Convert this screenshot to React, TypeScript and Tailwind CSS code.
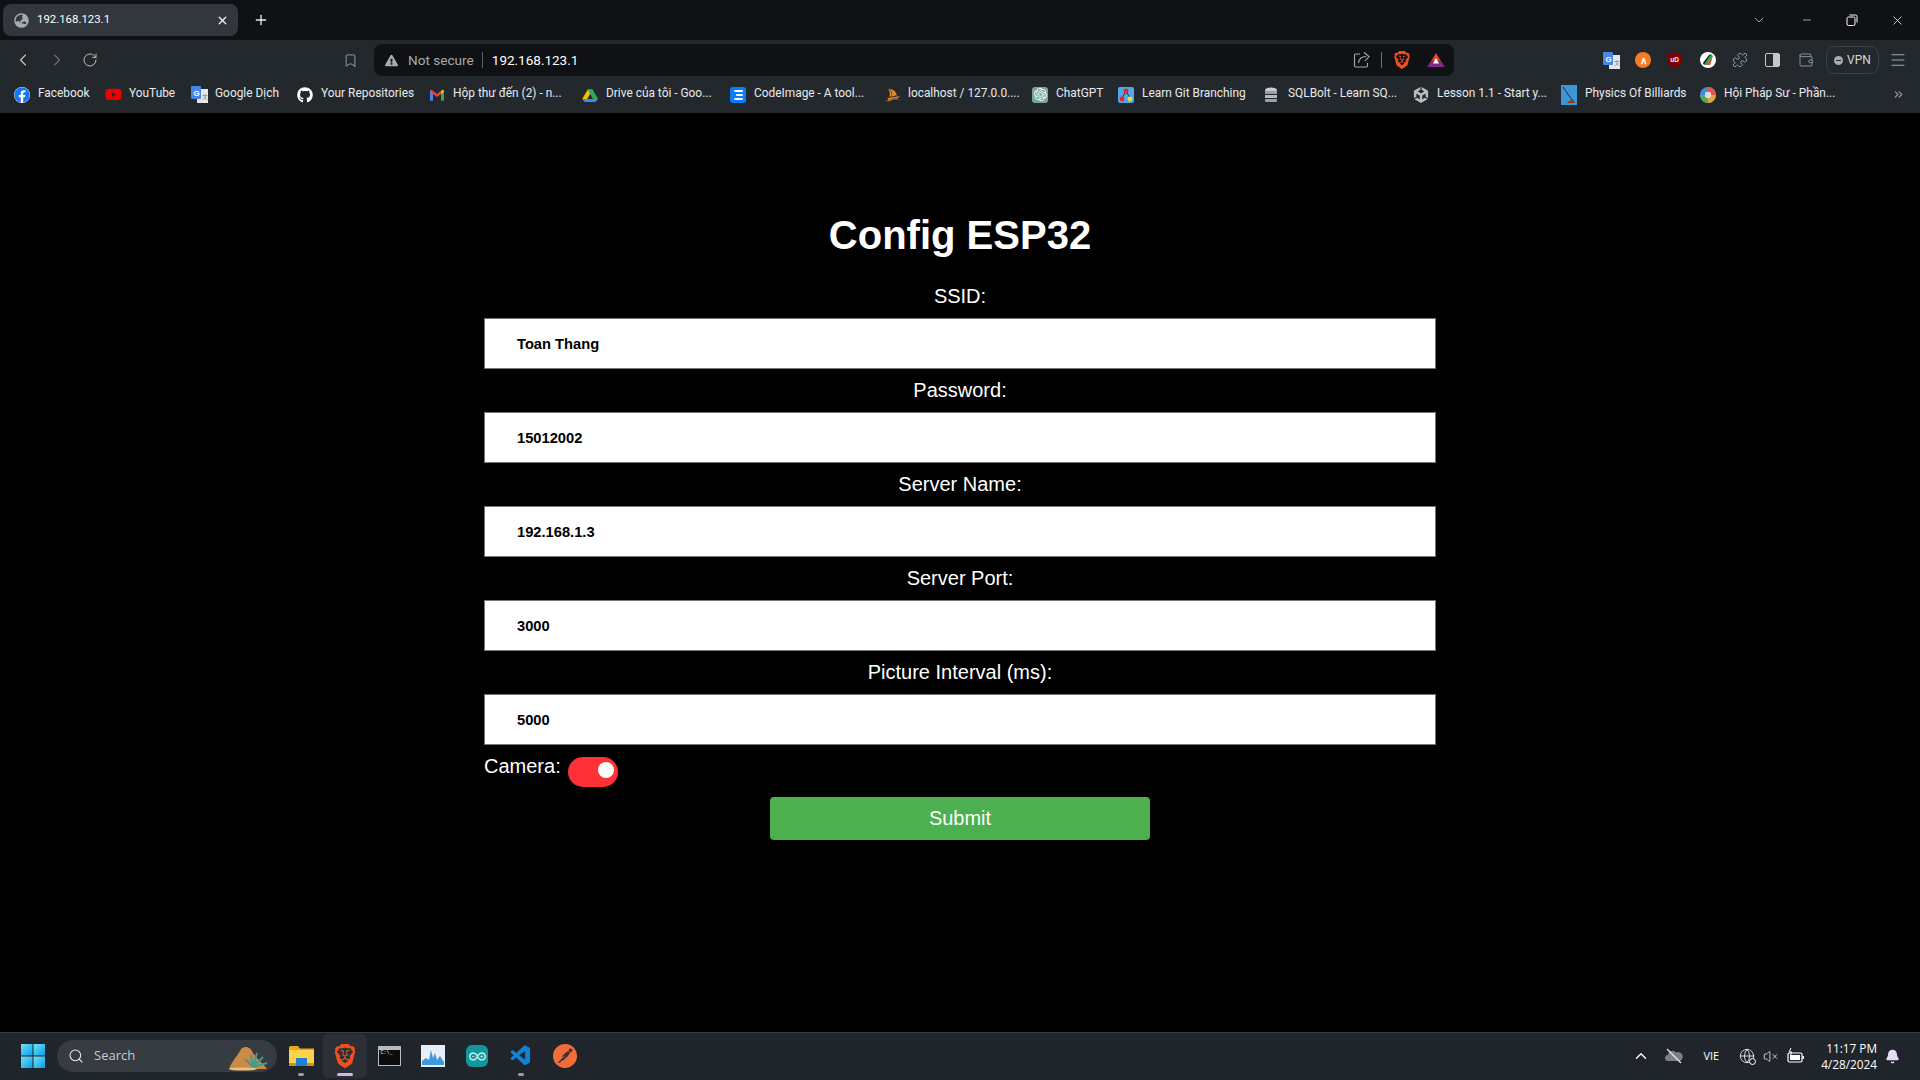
import React from "react";
import { ChevronLeft, ChevronRight, RotateCw, Bookmark, X, Plus, ChevronDown, Minus, Puzzle, Wallet, Menu, ChevronsRight, ChevronUp, Search, Globe, VolumeX, Bell } from "lucide-react";
import { FaFacebook, FaYoutube, FaGithub, FaGlobeAsia, FaExclamationTriangle } from "react-icons/fa";
import { SiBrave, SiOpenai, SiUnity, SiPhpmyadmin, SiArduino, SiPostman } from "react-icons/si";
import { VscVscode } from "react-icons/vsc";

const GT = () => (
  <svg width="17" height="17" viewBox="0 0 17 17">
    <rect x="6" y="3" width="11" height="14" fill="#e5e7eb" />
    <rect x="0" y="0" width="10" height="13" rx="1" fill="#4a86e8" />
    <text x="2.4" y="9.5" fontSize="8" fontWeight="700" fill="#fff" fontFamily="Liberation Sans">G</text>
    <text x="10.5" y="13" fontSize="6" fill="#6b7280" fontFamily="Liberation Sans">文</text>
  </svg>
);
const Gmail = () => (
  <svg width="16" height="16" viewBox="0 0 16 16">
    <path d="M1 3.5V13.5H4V7L8 10L8 7L2.5 2.8Z" fill="#ea4335" />
    <path d="M15 3.5V13.5H12V7L8 10V7L13.5 2.8Z" fill="#ea4335" />
    <path d="M1 4V13.5H4V7Z" fill="#4285f4" />
    <path d="M15 4V13.5H12V7Z" fill="#34a853" />
    <path d="M12 7L15 4.8V3.5L13.5 2.8L12 3.9Z" fill="#fbbc04" />
  </svg>
);
const Drive = () => (
  <svg width="16" height="16" viewBox="0 0 16 16">
    <path d="M5.5 1.5H10.5L5 11H0Z" fill="#fbbc04" transform="translate(0.2 1)" />
    <path d="M10.7 2.5L16 12H11L5.7 2.5Z" fill="#34a853" />
    <path d="M5 12H16L13.5 15H2.5L0.2 12Z" fill="#4285f4" />
  </svg>
);
const CodeImage = () => (
  <div className="w-4 h-4 rounded-[3px] bg-[#0a7cff] flex flex-col items-center justify-center gap-[2px]">
    <div className="w-[9px] h-[2px] bg-white rounded" />
    <div className="w-[7px] h-[2px] bg-white rounded ml-[2px]" />
    <div className="w-[9px] h-[2px] bg-white rounded" />
  </div>
);
const GitB = () => (
  <svg width="16" height="16" viewBox="0 0 16 16">
    <rect width="16" height="16" rx="2" fill="#4fa8e8" />
    <path d="M8 4L4 11M8 4L12 11" stroke="#17324a" strokeWidth="1" />
    <circle cx="8" cy="4" r="2.4" fill="#e8262b" />
    <circle cx="4" cy="12" r="2.4" fill="#e8262b" />
    <circle cx="12" cy="12" r="2.4" fill="#eadf3a" />
  </svg>
);
const Db = () => (
  <svg width="14" height="16" viewBox="0 0 14 16">
    <ellipse cx="7" cy="3" rx="6" ry="2.5" fill="#c8ccd0" />
    <rect x="1" y="4" width="12" height="3" fill="#9aa0a6" />
    <rect x="1" y="8" width="12" height="3" fill="#b6bbc0" />
    <rect x="1" y="12" width="12" height="3" rx="1" fill="#9aa0a6" />
  </svg>
);
const Billiards = () => (
  <svg width="16" height="20" viewBox="0 0 16 20">
    <rect width="16" height="20" fill="#3b97d6" />
    <path d="M2 2L11 15" stroke="#41240f" strokeWidth="1" fill="none" />
    <path d="M5 18L12 14L14 18Z" fill="#8f3b24" />
  </svg>
);
const Mage = () => (
  <svg width="16" height="16" viewBox="0 0 16 16">
    <circle cx="8" cy="8" r="8" fill="#3f8fd6" />
    <path d="M8 8L8 0A8 8 0 0 1 16 8Z" fill="#e2574c" />
    <path d="M8 8L16 8A8 8 0 0 1 8 16Z" fill="#e8a33c" />
    <path d="M8 8L8 16A8 8 0 0 1 0 8Z" fill="#58a55c" />
    <circle cx="8" cy="8" r="3.2" fill="#ddd" />
  </svg>
);

const bookmarks = [
  { w: "w-[91px]", t: "Facebook", i: <FaFacebook className="text-[#1877f2] bg-white rounded-full" size={16} /> },
  { w: "w-[86px]", t: "YouTube", i: <FaYoutube className="text-[#f00000]" size={17} /> },
  { w: "w-[106px]", t: "Google Dịch", i: <GT /> },
  { w: "w-[132px]", t: "Your Repositories", i: <FaGithub className="text-white" size={16} /> },
  { w: "w-[153px]", t: "Hộp thư đến (2) - n...", i: <Gmail /> },
  { w: "w-[148px]", t: "Drive của tôi - Goo...", i: <Drive /> },
  { w: "w-[154px]", t: "CodeImage - A tool...", i: <CodeImage /> },
  { w: "w-[148px]", t: "localhost / 127.0.0....", i: <SiPhpmyadmin className="text-[#e58a2b]" size={18} /> },
  { w: "w-[86px]", t: "ChatGPT", i: <div className="w-4 h-4 rounded-[3px] bg-[#74aa9c] flex items-center justify-center"><SiOpenai className="text-white" size={13} /></div> },
  { w: "w-[146px]", t: "Learn Git Branching", i: <GitB /> },
  { w: "w-[149px]", t: "SQLBolt - Learn SQ...", i: <Db /> },
  { w: "w-[148px]", t: "Lesson 1.1 - Start y...", i: <SiUnity className="text-[#b8bcc0]" size={16} /> },
  { w: "w-[139px]", t: "Physics Of Billiards", i: <Billiards /> },
  { w: "w-[190px]", t: "Hội Pháp Sư - Phần...", i: <Mage /> },
];

const fields = [
  ["SSID:", "Toan Thang"],
  ["Password:", "15012002"],
  ["Server Name:", "192.168.1.3"],
  ["Server Port:", "3000"],
  ["Picture Interval (ms):", "5000"],
];

const Win11 = () => (
  <svg width="24" height="24" viewBox="0 0 24 24">
    <defs>
      <linearGradient id="w" x1="0" y1="0" x2="1" y2="1">
        <stop offset="0" stopColor="#6fe3f7" />
        <stop offset="1" stopColor="#0b9be8" />
      </linearGradient>
    </defs>
    <rect x="0" y="0" width="11.5" height="11.5" fill="url(#w)" />
    <rect x="12.5" y="0" width="11.5" height="11.5" fill="url(#w)" />
    <rect x="0" y="12.5" width="11.5" height="11.5" fill="url(#w)" />
    <rect x="12.5" y="12.5" width="11.5" height="11.5" fill="url(#w)" />
  </svg>
);
const Folder = () => (
  <svg width="25" height="22" viewBox="0 0 25 22">
    <path d="M0 2.5A1.5 1.5 0 0 1 1.5 1H9L11 3.5H25V21H0Z" fill="#e9a916" />
    <rect x="0" y="5" width="25" height="16" fill="#fbd24a" />
    <rect x="7" y="13" width="11" height="8" fill="#1b82d2" />
    <rect x="0" y="18" width="7" height="3" fill="#c9921a" />
    <rect x="18" y="18" width="7" height="3" fill="#c9921a" />
  </svg>
);
const Cmd = () => (
  <div className="w-[23px] h-[20px] bg-[#0c0c0c] border border-[#b8bcc0] flex flex-col">
    <div className="h-[3px] bg-[#b8bcc0]" />
    <div className="text-[5px] leading-[7px] text-white pl-[2px] font-['Liberation_Mono']">C:\_</div>
  </div>
);
const Monitor = () => (
  <svg width="24" height="22" viewBox="0 0 24 22">
    <rect width="24" height="22" fill="#e8eef5" />
    <path d="M1 20V16L5 13L8 15L10 5L12 13L14 8L16 15L19 11L23 17V20Z" fill="#3f97dc" />
  </svg>
);
const Arduino = () => (
  <div className="w-[22px] h-[22px] rounded-[6px] bg-[#12979c] flex items-center justify-center">
    <SiArduino className="text-[#c9f1f1]" size={17} />
  </div>
);
const Battery = () => (
  <svg width="18" height="16" viewBox="0 0 18 16" fill="none">
    <rect x="1" y="5" width="14" height="9" rx="1.5" stroke="#fff" strokeWidth="1.2" />
    <rect x="3" y="7" width="10" height="5" fill="#fff" />
    <rect x="15.5" y="8" width="1.5" height="3" fill="#fff" />
    <path d="M4 0L2 4H5L3.5 7" stroke="#fff" strokeWidth="1" />
  </svg>
);
const Cloud = () => (
  <svg width="18" height="16" viewBox="0 0 18 16">
    <path d="M3 13A3 3 0 0 1 3 7A4.5 4.5 0 0 1 11 4.5A4 4 0 0 1 15 13Z" fill="#7d8186" />
    <path d="M2 1L16 15" stroke="#e5e7eb" strokeWidth="1.2" />
  </svg>
);

export default function App() {
  return (
    <div className="w-[1920px] h-[1080px] flex flex-col bg-black overflow-hidden font-['Roboto',sans-serif] text-white">
      {/* tab strip */}
      <div className="h-[40px] shrink-0 bg-[#0f1115] flex items-center">
        <div className="ml-[3px] w-[235px] h-[32px] rounded-[8px] bg-[#31373c] flex items-center pl-[11px] pr-[9px]">
          <FaGlobeAsia size={15} className="text-[#a5abb0]" />
          <span className="ml-[8px] text-[11.4px] flex-1">192.168.123.1</span>
          <X size={13} strokeWidth={2.5} className="text-[#e8eaed]" />
        </div>
        <Plus size={16} strokeWidth={2} className="ml-[15px] text-[#e8eaed]" />
        <div className="flex-1" />
        <ChevronDown size={16} strokeWidth={1.2} className="text-[#c5c8cb] mr-[3px]" />
        <Minus size={12} strokeWidth={1.2} className="ml-[31px]" />
        <svg width="12" height="12" viewBox="0 0 12 12" fill="none" className="ml-[33px]">
          <rect x="1" y="3" width="8" height="8.5" rx="1.5" stroke="#fff" />
          <path d="M3.5 1H9.5A1.5 1.5 0 0 1 11 2.5V8.5" stroke="#fff" />
        </svg>
        <X size={15} strokeWidth={1.2} className="ml-[32px] mr-[15px]" />
      </div>

      {/* toolbar */}
      <div className="h-[36px] shrink-0 bg-[#23282c] flex items-end">
        <div className="w-[374px] h-[32px] flex items-center">
          <ChevronLeft size={20} strokeWidth={1.3} className="ml-[13px] text-[#c5c8cb]" />
          <ChevronRight size={20} strokeWidth={1.3} className="ml-[14px] text-[#6a6f74]" />
          <RotateCw size={16} strokeWidth={1.4} className="ml-[15px] text-[#c5c8cb]" />
          <Bookmark size={15} strokeWidth={1.4} className="ml-[245px] text-[#a5abb0]" />
        </div>
        <div className="w-[1080px] h-[32px] bg-[#0f1115] rounded-[8px] flex items-center">
          <FaExclamationTriangle size={13} className="ml-[11px] text-[#a5abb0]" />
          <span className="ml-[10px] text-[13.6px] text-[#a5abb0]">Not secure</span>
          <div className="ml-[8px] w-px h-[16px] bg-[#5c6166]" />
          <span className="ml-[9px] text-[13.5px]">192.168.123.1</span>
          <div className="flex-1" />
          <svg width="18" height="18" viewBox="0 0 18 18" fill="none" stroke="#a5abb0" strokeWidth="1.1">
            <path d="M7 3H3A1.5 1.5 0 0 0 1.5 4.5V14.5A1.5 1.5 0 0 0 3 16H13A1.5 1.5 0 0 0 14.5 14.5V12" />
            <path d="M5.5 12C6 7.5 9 5.5 13 5.5M11 1.5L16 5.5L12 10" />
          </svg>
          <div className="ml-[10px] w-px h-[16px] bg-[#6a6f74]" />
          <SiBrave size={18} className="ml-[11px] text-[#f1501e]" />
          <svg width="18" height="16" viewBox="0 0 18 16" className="ml-[16px] mr-[9px]">
            <path d="M9 1L17.5 15H0.5Z" fill="#e8432d" />
            <path d="M0.5 15L5 8.5L13 8.5L17.5 15Z" fill="#7a2b86" />
            <path d="M9 6L12 11.5H6Z" fill="#fff" />
          </svg>
        </div>
        <div className="flex-1 h-[32px] flex items-center pl-[149px]">
          <div className="w-[17px] shrink-0"><GT /></div>
          <div className="ml-[15px] w-[16px] h-[16px] shrink-0 rounded-full bg-[#f57c1f] flex items-center justify-center text-[10px] font-bold text-white">∧</div>
          <svg width="14" height="16" viewBox="0 0 14 16" className="ml-[17px] shrink-0">
            <path d="M7 0L14 2V9C14 12 10 15 7 16C4 15 0 12 0 9V2Z" fill="#800000" />
            <text x="2.2" y="10" fontSize="6.5" fontWeight="700" fill="#eee" fontFamily="Liberation Sans">uD</text>
          </svg>
          <svg width="16" height="16" viewBox="0 0 16 16" className="ml-[18px] shrink-0">
            <circle cx="8" cy="8" r="8" fill="#fff" />
            <path d="M11 2L4 13L7 13L13 4Z" fill="#2aa84a" />
            <path d="M13 4L7 13L10 13Z" fill="#e33" />
            <path d="M9 3L3 11L4 13L11 2Z" fill="#111" />
          </svg>
          <Puzzle size={16} strokeWidth={1.3} className="ml-[16px] shrink-0 text-[#a5abb0]" />
          <div className="ml-[17px] w-[15px] h-[14px] shrink-0 border-[1.5px] border-[#c5c8cb] rounded-[2px] flex justify-end"><div className="w-[6px] bg-[#c5c8cb]" /></div>
          <Wallet size={16} strokeWidth={1.3} className="ml-[18px] shrink-0 text-[#9aa0a6]" />
          <div className="ml-[12px] w-[53px] h-[28px] shrink-0 border border-[#3b4146] rounded-[9px] flex items-center justify-center gap-[4px]">
            <div className="w-[9px] h-[9px] rounded-full bg-[#a5abb0] flex items-center justify-center"><div className="w-[5px] h-px bg-[#23282c]" /></div>
            <span className="text-[12px] text-[#d5d8db]">VPN</span>
          </div>
          <Menu size={18} strokeWidth={1.3} className="ml-[10px] shrink-0 text-[#a5abb0]" />
        </div>
      </div>

      {/* bookmarks */}
      <div className="h-[37px] shrink-0 bg-[#23282c] flex items-center pl-[14px] relative">
        {bookmarks.map((b) => (
          <div key={b.t} className={`${b.w} shrink-0 flex items-center`}>
            <div className="w-[24px] h-[20px] shrink-0 flex items-center">{b.i}</div>
            <span className="text-[11.9px] mb-[1px] whitespace-nowrap text-[#e8eaed]">{b.t}</span>
          </div>
        ))}
        <ChevronsRight size={13} className="absolute left-[1892px] text-[#9aa0a6]" />
      </div>

      {/* page */}
      <main className="flex-1 bg-black font-['Liberation_Sans',Arial,sans-serif]">
        <div className="w-[952px] mx-auto pt-[99px]">
          <h1 className="text-[40px] leading-[46px] font-bold text-center mb-[25px]">Config ESP32</h1>
          {fields.map(([l, v]) => (
            <div key={l}>
              <label className="block text-[20px] leading-[26px] text-center mb-[9px]">{l}</label>
              <div className="h-[51px] mb-[8px] bg-white border border-[#767676] flex items-center pl-[32px] pt-[1px] text-[14.7px] font-bold text-black">{v}</div>
            </div>
          ))}
          <div className="flex items-start">
            <span className="text-[20px] leading-[26px]">Camera:</span>
            <div className="ml-[7px] mt-[4px] w-[50px] h-[30px] rounded-[15px] bg-[#ff3036] flex justify-end pr-[4px] pt-[5px]">
              <div className="w-[16px] h-[16px] rounded-full bg-white" />
            </div>
          </div>
          <button className="block mx-auto mt-[10px] w-[380px] h-[43px] pb-[2px] rounded-[4px] bg-[#4caf50] text-[20px] text-white text-center">Submit</button>
        </div>
      </main>

      {/* taskbar */}
      <div className="h-[48px] shrink-0 bg-[#20242b] border-t border-[#3a3d42] pb-[1px] flex items-center font-['Open_Sans',sans-serif]">
        <div className="ml-[21px] w-[24px] shrink-0"><Win11 /></div>
        <div className="ml-[12px] w-[220px] h-[32px] shrink-0 rounded-full bg-[#373b42] flex items-center pl-[11px] relative">
          <Search size={16} strokeWidth={1.6} className="text-[#e5e7eb]" />
          <span className="ml-[10px] text-[13px] text-[#c8ccd0]">Search</span>
          <svg width="42" height="28" viewBox="0 0 42 28" className="absolute right-[8px] top-[3px]">
            <path d="M2 26C6 16 10 14 14 6C18 2 24 4 26 10C30 16 36 20 40 26Z" fill="#c98b45" />
            <path d="M26 24L24 12M26 24L30 10M26 24L36 14M26 24L40 20M26 24L18 16" stroke="#3f9a8f" strokeWidth="2" />
            <ellipse cx="16" cy="26" rx="14" ry="1.6" fill="#e8c37c" />
          </svg>
        </div>
        <div className="ml-[2px] w-[44px] h-[44px] shrink-0 flex items-center justify-center relative">
          <Folder />
          <div className="absolute bottom-[2px] w-[6px] h-[3px] rounded-full bg-[#9a9ea3]" />
        </div>
        <div className="w-[44px] h-[44px] shrink-0 rounded-[5px] bg-[#2c3036] flex items-center justify-center relative">
          <SiBrave size={24} className="text-[#f1501e]" />
          <div className="absolute bottom-[2px] w-[16px] h-[3px] rounded-full bg-[#cbb8ea]" />
        </div>
        <div className="w-[44px] shrink-0 flex justify-center"><Cmd /></div>
        <div className="w-[44px] shrink-0 flex justify-center"><Monitor /></div>
        <div className="w-[44px] shrink-0 flex justify-center"><Arduino /></div>
        <div className="w-[44px] h-[44px] shrink-0 flex items-center justify-center relative">
          <VscVscode size={24} className="text-[#0f84d6]" />
          <div className="absolute bottom-[2px] w-[6px] h-[3px] rounded-full bg-[#9a9ea3]" />
        </div>
        <div className="w-[44px] shrink-0 flex justify-center"><SiPostman size={24} className="text-[#f26b3a]" /></div>
        <div className="flex-1" />
        <ChevronUp size={18} strokeWidth={1.8} className="mr-[1px]" />
        <div className="ml-[14px]"><Cloud /></div>
        <span className="ml-[20px] text-[11px]">VIE</span>
        <div className="ml-[20px] relative">
          <Globe size={16} strokeWidth={1.2} />
          <div className="absolute right-[-1px] bottom-[-1px] w-[7px] h-[7px] rounded-full border border-white bg-[#20242b]" />
        </div>
        <VolumeX size={15} strokeWidth={1.2} className="ml-[8px]" />
        <div className="ml-[9px]"><Battery /></div>
        <div className="ml-[16px] flex flex-col items-end text-[11.8px] leading-[16px]">
          <span>11:17 PM</span>
          <span>4/28/2024</span>
        </div>
        <Bell size={15} fill="#e8dcf5" stroke="#e8dcf5" className="ml-[8px] mr-[20px]" />
      </div>
    </div>
  );
}
